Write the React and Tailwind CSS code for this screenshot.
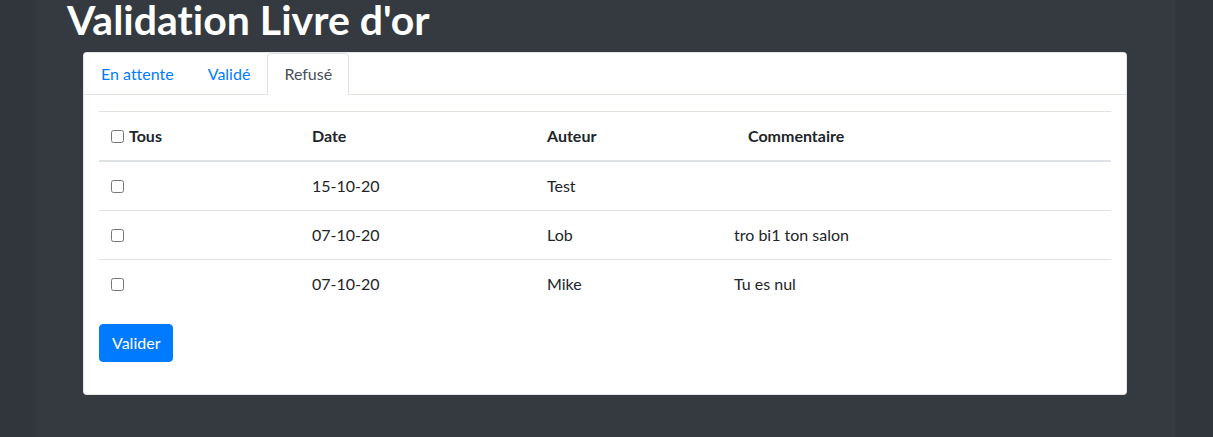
import React, { useState } from 'react';

const rows = [
   { id: 1, date: '15-10-20', author: 'Test', comment: '' },
   { id: 2, date: '07-10-20', author: 'Lob', comment: 'tro bi1 ton salon' },
   { id: 3, date: '07-10-20', author: 'Mike', comment: 'Tu es nul' },
];

const tabs = ['En attente', 'Validé', 'Refusé'];

const App = () => {
   const [activeTab, setActiveTab] = useState('Refusé');
   const [checked, setChecked] = useState({});

   const allChecked = rows.every(r => checked[r.id]);

   const toggleAll = () => {
      const next = {};
      rows.forEach(r => { next[r.id] = !allChecked; });
      setChecked(next);
   };

   return (
      <div className="min-h-[437px] bg-[#31363d] text-[#212529] [font-variant-ligatures:none]" style={{ fontFamily: 'Lato, "Noto Sans", sans-serif' }}>
         <div className="w-[1140px] ml-[35px] min-h-[437px] bg-[#343a40] pb-10">
            <h1 className="text-[41px] font-bold leading-[40px] text-white pl-[32px] mb-[12px]">Validation Livre d'or</h1>

            <div className="ml-[48px] w-[1044px] bg-white rounded border border-black/10">
               {/* Tabs */}
               <ul className="flex border-b border-[#dee2e6]">
                  {tabs.map(tab => (
                     <li key={tab} className="-mb-px">
                        <button
                           onClick={() => setActiveTab(tab)}
                           className={`block px-4 py-2 text-base leading-6 border rounded-t ${activeTab === tab ? 'text-[#495057] bg-white border-[#dee2e6] border-b-white' : 'text-[#007bff] border-transparent'}`}
                        >
                           {tab}
                        </button>
                     </li>
                  ))}
               </ul>

               <div className="px-[15px] pt-4 pb-8">
                  <table className="w-full border-collapse text-base leading-6 mb-4">
                     <thead>
                        <tr>
                           <th className="w-[201px] text-left font-bold p-3 border-t border-b-2 border-[#dee2e6]">
                              <input type="checkbox" checked={allChecked} onChange={toggleAll} className="m-0 mr-[5px] w-[13px] h-[13px] align-[-1px]" />
                              Tous
                           </th>
                           <th className="w-[235px] text-left font-bold p-3 border-t border-b-2 border-[#dee2e6]">Date</th>
                           <th className="w-[187px] text-left font-bold p-3 border-t border-b-2 border-[#dee2e6]">Auteur</th>
                           <th className="text-left font-bold p-3 pl-[26px] border-t border-b-2 border-[#dee2e6]">Commentaire</th>
                        </tr>
                     </thead>
                     <tbody>
                        {rows.map(row => (
                           <tr key={row.id}>
                              <td className="p-3 border-t border-[#dee2e6]">
                                 <input
                                    type="checkbox"
                                    checked={!!checked[row.id]}
                                    onChange={() => setChecked({ ...checked, [row.id]: !checked[row.id] })}
                                    className="m-0 w-[13px] h-[13px] align-[-1px]"
                                 />
                              </td>
                              <td className="p-3 border-t border-[#dee2e6]">{row.date}</td>
                              <td className="p-3 border-t border-[#dee2e6]">{row.author}</td>
                              <td className="p-3 border-t border-[#dee2e6]">{row.comment}</td>
                           </tr>
                        ))}
                     </tbody>
                  </table>

                  <button className="bg-[#007bff] border border-[#007bff] text-white text-base leading-6 px-3 py-1.5 rounded">Valider</button>
               </div>
            </div>
         </div>
      </div>
   );
};

export default App;
